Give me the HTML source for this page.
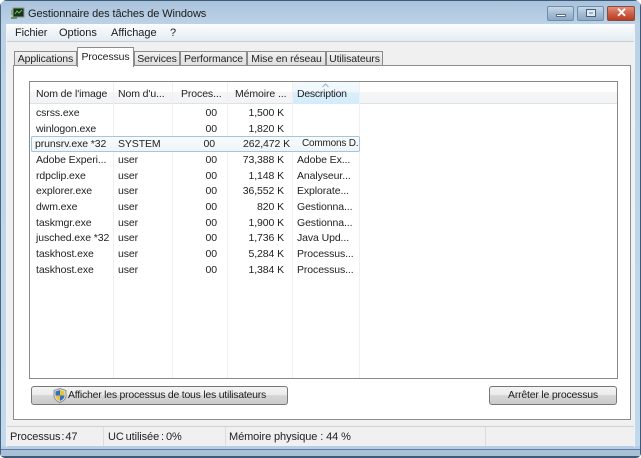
<!DOCTYPE html>
<html lang="fr"><head><meta charset="utf-8"><style>
html,body{margin:0;padding:0;background:#fff}
#w{position:relative;width:641px;height:458px;overflow:hidden;font-family:"Liberation Sans",sans-serif;font-size:10.5px;letter-spacing:-.1px;color:#222;background:linear-gradient(180deg,#a9c3dc 0,#bcd2e6 24px,#c2d8ec 100%);border-radius:7px 7px 5px 5px;filter:blur(.35px)}
#w div{position:absolute;white-space:nowrap;box-sizing:border-box}
.t{line-height:14px}
.tab{top:51px;height:15px;background:linear-gradient(#f2f2f2,#dcdcdc);border:1px solid #8c8c8c;border-bottom:0;text-align:center;line-height:14px}
.vl{top:82px;width:1px;height:296px;background:#f0f0f0}
.r{text-align:right}
.btn{height:19px;top:386px;border:1px solid #777;border-radius:3px;background:linear-gradient(#f3f3f3 0,#ececec 45%,#d6d6d6 50%,#cbcbcb 100%);text-align:center;line-height:17px;color:#1c1c1c}
.wb{top:6px;height:15px;border:1px solid #6f8dab;border-radius:2px}
</style></head><body><div id="w">
<div style="left:0;top:0;width:641px;height:1px;background:#3e5a78"></div>
<div style="left:0;top:0;width:1px;height:458px;background:#4a6480"></div>
<div style="left:640px;top:0;width:1px;height:458px;background:#3e5a78"></div>
<div style="left:1px;top:446px;width:639px;height:3px;background:#b5cde5"></div>
<div style="left:1px;top:449px;width:639px;height:1px;background:#5f7d9e"></div>
<div style="left:1px;top:450px;width:639px;height:6px;background:#a9c0d6"></div>
<div style="left:0;top:456px;width:641px;height:2px;background:#3e5a78"></div>
<div style="left:6px;top:24px;width:1px;height:423px;background:#eef4fa"></div>
<div style="left:634px;top:24px;width:1px;height:423px;background:#eef4fa"></div>

<svg style="position:absolute;left:11px;top:7px" width="14" height="13" viewBox="0 0 14 13"><rect x="2" y="1" width="11" height="9" fill="#1d2f1d" stroke="#8a9a8a"/><path d="M4 7l2-3 2 2 3-3" stroke="#4bd04b" fill="none"/><rect x="0" y="10" width="6" height="2" fill="#6b8a6b"/><rect x="0" y="3" width="2" height="5" fill="#86a886"/></svg>
<div class="t" style="left:28px;top:7px;font-size:11px;letter-spacing:-.1px;color:#1c1c1c">Gestionnaire des tâches de Windows</div>

<div class="wb" style="left:547px;width:27px;background:linear-gradient(#c8d9e9,#a6bdd4 50%,#8fa9c3)"></div>
<div style="left:556px;top:14px;width:10px;height:3px;background:#fff;border:1px solid #54708c"></div>
<div class="wb" style="left:577px;width:27px;background:linear-gradient(#c8d9e9,#a6bdd4 50%,#8fa9c3)"></div>
<div style="left:586px;top:9px;width:10px;height:8px;border:1px solid #44607c;background:#dfe9f2"></div>
<div style="left:589px;top:12px;width:4px;height:2px;background:#9eb4c9"></div>
<div class="wb" style="left:607px;width:28px;background:linear-gradient(#e0917e,#cf5f45 50%,#b83e22);border-color:#8d4a3a"></div>
<div style="left:615px;top:6px;width:13px;height:15px;color:#fff;font-weight:bold;font-size:13px;line-height:14px;text-align:center">✕</div>

<div style="left:7px;top:24px;width:627px;height:18px;background:linear-gradient(#fbfcfd,#e2eaf2)"></div>
<div style="left:7px;top:41px;width:627px;height:1px;background:#c8cdd2"></div>
<div style="left:7px;top:42px;width:627px;height:384px;background:#f0f0f0"></div>
<div class="t" style="left:15px;top:26px;font-size:11px;color:#1c1c1c">Fichier</div>
<div class="t" style="left:59px;top:26px;font-size:11px;letter-spacing:0;color:#1c1c1c">Options</div>
<div class="t" style="left:111px;top:26px;font-size:11px;letter-spacing:0;color:#1c1c1c">Affichage</div>
<div class="t" style="left:170px;top:26px;font-size:11px;color:#1c1c1c">?</div>

<div class="tab" style="left:14px;width:63px">Applications</div>
<div class="tab" style="left:134px;width:46px">Services</div>
<div class="tab" style="left:180px;width:67px">Performance</div>
<div class="tab" style="left:247px;width:79px">Mise en réseau</div>
<div class="tab" style="left:326px;width:57px">Utilisateurs</div>

<div style="left:13px;top:65px;width:618px;height:355px;background:#fff;border:1px solid #8e8e8e"></div>
<div class="tab" style="left:77px;top:47px;width:57px;height:20px;background:#fff;line-height:18px;z-index:2">Processus</div>

<div style="left:29px;top:81px;width:589px;height:298px;border:1px solid #8a8a8a;background:#fff"></div>
<div style="left:30px;top:82px;width:587px;height:22px;background:linear-gradient(#fff 0,#fff 45%,#f4f5f6 50%,#f3f4f5 100%);border-bottom:1px solid #dfe2e5"></div>
<div style="left:292px;top:82px;width:68px;height:22px;background:linear-gradient(#f3f9fd 0,#eef7fd 45%,#d8eefb 50%,#d4ecfa 100%);border-right:1px solid #bcd9ec;border-left:1px solid #bcd9ec"></div>
<svg style="position:absolute;left:322px;top:83px" width="7" height="5"><path d="M.5 4L3.5 1 6.5 4" fill="none" stroke="#a5b0ba"/></svg>
<div class="vl" style="left:113px"></div><div class="vl" style="left:172px"></div><div class="vl" style="left:227px"></div><div class="vl" style="left:292px"></div><div class="vl" style="left:359px"></div>

<div class="t" style="left:36px;top:87px">Nom de l'image</div>
<div class="t" style="left:118px;top:87px">Nom d'u...</div>
<div class="t" style="left:181px;top:87px">Proces...</div>
<div class="t" style="left:235px;top:87px">Mémoire ...</div>
<div class="t" style="left:297px;top:87px;letter-spacing:-.25px">Description</div>

<div style="left:31px;top:136px;width:329px;height:16px;border:1px solid #a5c4de;border-radius:2px;background:linear-gradient(#f8fbfd,#eff4f8);z-index:1"></div>

<div style="left:0;top:0;width:641px;height:458px;z-index:3">
<div class="t" style="left:36px;top:106px">csrss.exe</div><div class="t r" style="left:180px;top:106px;width:37px">00</div><div class="t r" style="left:230px;top:106px;width:54px">1,500 K</div>
<div class="t" style="left:36px;top:122px">winlogon.exe</div><div class="t r" style="left:180px;top:122px;width:37px">00</div><div class="t r" style="left:230px;top:122px;width:54px">1,820 K</div>
<div class="t" style="left:35px;top:137px">prunsrv.exe *32</div><div class="t" style="left:118px;top:137px">SYSTEM</div><div class="t r" style="left:178px;top:137px;width:37px">00</div><div class="t r" style="left:236px;top:137px;width:54px">262,472 K</div><div class="t" style="left:302px;top:137px;width:56px;overflow:hidden;font-size:10px;letter-spacing:-.2px">Commons D...</div>
<div class="t" style="left:36px;top:153px">Adobe Experi...</div><div class="t" style="left:118px;top:153px">user</div><div class="t r" style="left:180px;top:153px;width:37px">00</div><div class="t r" style="left:230px;top:153px;width:54px">73,388 K</div><div class="t" style="left:297px;top:153px">Adobe Ex...</div>
<div class="t" style="left:36px;top:169px">rdpclip.exe</div><div class="t" style="left:118px;top:169px">user</div><div class="t r" style="left:180px;top:169px;width:37px">00</div><div class="t r" style="left:230px;top:169px;width:54px">1,148 K</div><div class="t" style="left:297px;top:169px">Analyseur...</div>
<div class="t" style="left:36px;top:184px">explorer.exe</div><div class="t" style="left:118px;top:184px">user</div><div class="t r" style="left:180px;top:184px;width:37px">00</div><div class="t r" style="left:230px;top:184px;width:54px">36,552 K</div><div class="t" style="left:297px;top:184px">Explorate...</div>
<div class="t" style="left:36px;top:200px">dwm.exe</div><div class="t" style="left:118px;top:200px">user</div><div class="t r" style="left:180px;top:200px;width:37px">00</div><div class="t r" style="left:230px;top:200px;width:54px">820 K</div><div class="t" style="left:297px;top:200px">Gestionna...</div>
<div class="t" style="left:36px;top:216px">taskmgr.exe</div><div class="t" style="left:118px;top:216px">user</div><div class="t r" style="left:180px;top:216px;width:37px">00</div><div class="t r" style="left:230px;top:216px;width:54px">1,900 K</div><div class="t" style="left:297px;top:216px">Gestionna...</div>
<div class="t" style="left:36px;top:231px">jusched.exe *32</div><div class="t" style="left:118px;top:231px">user</div><div class="t r" style="left:180px;top:231px;width:37px">00</div><div class="t r" style="left:230px;top:231px;width:54px">1,736 K</div><div class="t" style="left:297px;top:231px">Java Upd...</div>
<div class="t" style="left:36px;top:247px">taskhost.exe</div><div class="t" style="left:118px;top:247px">user</div><div class="t r" style="left:180px;top:247px;width:37px">00</div><div class="t r" style="left:230px;top:247px;width:54px">5,284 K</div><div class="t" style="left:297px;top:247px">Processus...</div>
<div class="t" style="left:36px;top:263px">taskhost.exe</div><div class="t" style="left:118px;top:263px">user</div><div class="t r" style="left:180px;top:263px;width:37px">00</div><div class="t r" style="left:230px;top:263px;width:54px">1,384 K</div><div class="t" style="left:297px;top:263px">Processus...</div>
</div>

<div class="btn" style="left:31px;width:257px;padding-left:15px;letter-spacing:-.24px">Afficher les processus de tous les utilisateurs</div>
<svg style="position:absolute;left:53px;top:388px" width="14" height="15" viewBox="0 0 14 15"><path d="M7 .5L13 2.5V7.5C13 11 10 13.5 7 14.5 4 13.5 1 11 1 7.5V2.5Z" fill="#e9e3c9" stroke="#8a8f96"/><path d="M7 2L2.5 3.5V7.5H7Z" fill="#2f6fc4"/><path d="M7 2L11.5 3.5V7.5H7Z" fill="#e8c23c"/><path d="M2.5 7.5H7V13C5 12 2.5 10.5 2.5 7.5Z" fill="#e8c23c"/><path d="M11.5 7.5H7V13C9 12 11.5 10.5 11.5 7.5Z" fill="#2f6fc4"/></svg>
<div class="btn" style="left:489px;width:128px;letter-spacing:-.2px">Arrêter le processus</div>

<div style="left:7px;top:426px;width:627px;height:20px;background:#f0f0f0;border-top:1px solid #d0d0d0"></div>
<div style="left:103px;top:427px;width:1px;height:19px;background:#dcdcdc"></div>
<div style="left:225px;top:427px;width:1px;height:19px;background:#dcdcdc"></div>
<div style="left:485px;top:427px;width:1px;height:19px;background:#dcdcdc"></div>
<div class="t" style="left:10px;top:430px;font-size:11px;word-spacing:-2px">Processus : 47</div>
<div class="t" style="left:108px;top:430px;font-size:11px;word-spacing:-1px">UC utilisée : 0%</div>
<div class="t" style="left:229px;top:430px;font-size:11px">Mémoire physique : 44 %</div>
</div></body></html>
